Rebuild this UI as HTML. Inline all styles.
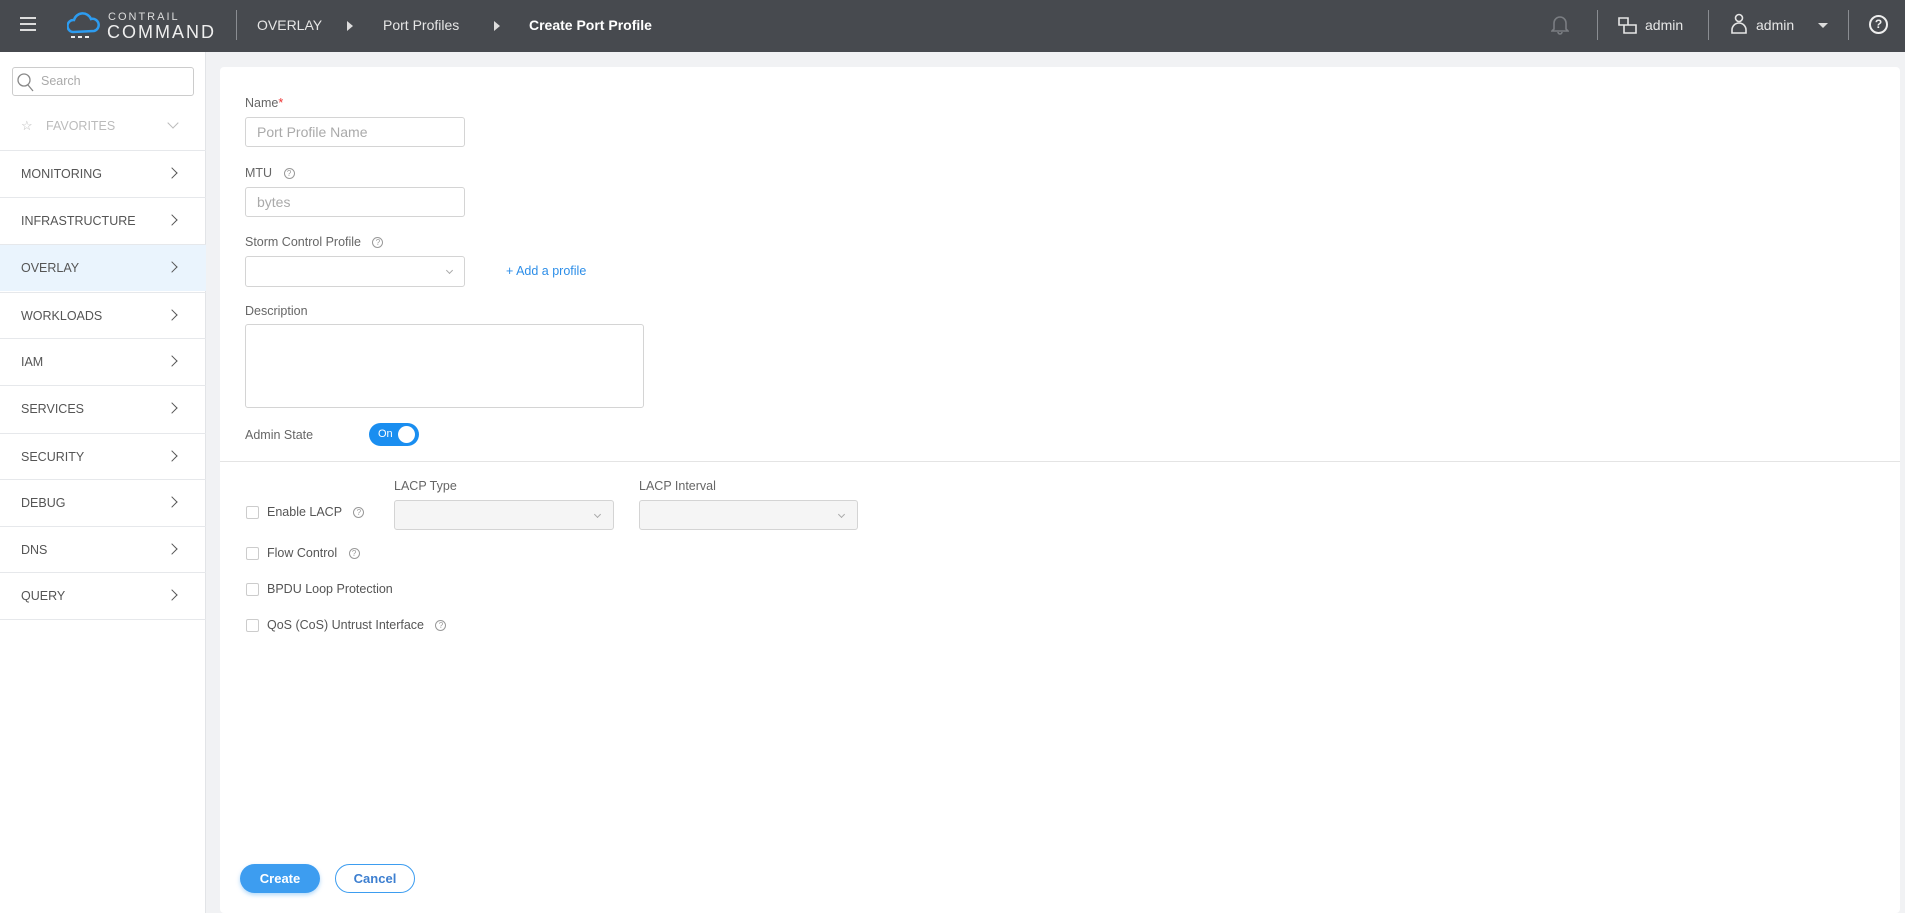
<!DOCTYPE html><html><head><style>
*{box-sizing:border-box;margin:0;padding:0}
body{width:1905px;height:913px;overflow:hidden;background:#f1f2f4;font-family:"Liberation Sans",sans-serif;position:relative;color:#555}
.a{position:absolute}
#hd{left:0;top:0;width:1905px;height:52px;background:#474a4f;color:#e6e6e6}
.sep{position:absolute;top:10px;width:1px;height:30px;background:#8a8d92}
#sb{left:0;top:52px;width:206px;height:861px;background:#fff;border-right:1px solid #e2e4e7}
.it{position:absolute;left:0;width:206px;height:47px;border-top:1px solid #e6e8eb;font-size:12.5px;color:#555;padding-left:21px;line-height:46px}
.it .ch{position:absolute;left:168px;top:18px;width:8px;height:8px;border-right:1.6px solid #555;border-top:1.6px solid #555;transform:rotate(45deg)}
#card{left:220px;top:67px;width:1680px;height:846px;background:#fff;border-radius:4px}
.lb{position:absolute;font-size:12.5px;color:#666}
.in{position:absolute;border:1px solid #d4d4d4;border-radius:3px;background:#fff;font-size:14px;color:#aaa;padding-left:11px}
.q{display:inline-block;width:11px;height:11px;border:1px solid #999;border-radius:50%;font-size:8px;line-height:9px;text-align:center;color:#999;vertical-align:middle;margin-left:8px}
.cb{position:absolute;width:13px;height:13px;border:1px solid #ccc;border-radius:2px}
.dd{position:absolute;width:5px;height:5px;border-right:1px solid #aaa;border-bottom:1px solid #aaa;transform:rotate(45deg)}
</style></head><body>
<div id="hd" class="a">
 <div class="a" style="left:20px;top:17px;width:16px;height:2px;background:#ddd;box-shadow:0 6px 0 #ddd,0 12px 0 #ddd"></div>
 <svg class="a" style="left:67px;top:10px" width="34" height="30" viewBox="0 0 34 30"><path d="M6 22a6 6 0 0 1 1-12 9 9 0 0 1 17-1 6 6 0 0 1 3 12z" fill="none" stroke="#2d9cf0" stroke-width="2.5"/><path d="M4 27h4M11 27h4M18 27h4" stroke="#eee" stroke-width="2"/></svg>
 <div class="a" style="left:108px;top:11px;font-size:11px;letter-spacing:2px;color:#ddd">CONTRAIL</div>
 <div class="a" style="left:107px;top:22px;font-size:18px;letter-spacing:2px;color:#eee">COMMAND</div>
 <div class="sep" style="left:236px"></div>
 <div class="a" style="left:257px;top:17px;font-size:14px">OVERLAY</div>
 <div class="a" style="left:347px;top:21px;border-left:6px solid #ddd;border-top:5px solid transparent;border-bottom:5px solid transparent"></div>
 <div class="a" style="left:383px;top:17px;font-size:14px">Port Profiles</div>
 <div class="a" style="left:494px;top:21px;border-left:6px solid #ddd;border-top:5px solid transparent;border-bottom:5px solid transparent"></div>
 <div class="a" style="left:529px;top:17px;font-size:14px;font-weight:bold;color:#fff">Create Port Profile</div>
 <svg class="a" style="left:1551px;top:14px" width="18" height="21" viewBox="0 0 18 21"><path d="M3 15V9a6 6 0 0 1 12 0v6l2 2H1z M7 18a2 2 0 0 0 4 0" fill="none" stroke="#7a7d82" stroke-width="1.6"/></svg>
 <div class="sep" style="left:1597px"></div>
 <svg class="a" style="left:1618px;top:17px" width="19" height="18" viewBox="0 0 19 18"><path d="M1 1h9v7H1z M6 8v8h12V8h-8" fill="none" stroke="#e6e6e6" stroke-width="1.6"/></svg>
 <div class="a" style="left:1645px;top:17px;font-size:14px">admin</div>
 <div class="sep" style="left:1708px"></div>
 <svg class="a" style="left:1731px;top:13px" width="16" height="22" viewBox="0 0 16 22"><circle cx="8" cy="5" r="3.5" fill="none" stroke="#e6e6e6" stroke-width="1.6"/><path d="M1 20v-3a7 7 0 0 1 14 0v3z" fill="none" stroke="#e6e6e6" stroke-width="1.6"/></svg>
 <div class="a" style="left:1756px;top:17px;font-size:14px">admin</div>
 <div class="a" style="left:1818px;top:23px;border-top:5px solid #ddd;border-left:5px solid transparent;border-right:5px solid transparent"></div>
 <div class="sep" style="left:1848px"></div>
 <div class="a" style="left:1869px;top:15px;width:19px;height:19px;border:2px solid #eee;border-radius:50%;font-size:12px;font-weight:bold;text-align:center;line-height:15px;color:#eee">?</div>
</div>
<div id="sb" class="a">
 <div class="a" style="left:12px;top:15px;width:182px;height:29px;border:1px solid #ccc;border-radius:3px"></div>
 <svg class="a" style="left:16px;top:20px" width="18" height="20"><circle cx="8" cy="8" r="6" fill="none" stroke="#888" stroke-width="1.3"/><path d="M12 13l5 6" stroke="#888" stroke-width="1.3"/></svg>
 <div class="a" style="left:41px;top:22px;font-size:12.5px;color:#aaa">Search</div>
 <div class="a" style="left:21px;top:66px;font-size:13px;color:#bbb">☆</div>
 <div class="a" style="left:46px;top:67px;font-size:12.5px;color:#bbb">FAVORITES</div>
 <div class="a" style="left:169px;top:67px;width:8px;height:8px;border-right:1.3px solid #bbb;border-bottom:1.3px solid #bbb;transform:rotate(45deg)"></div>
 <div class="it" style="top:98px">MONITORING<span class="ch"></span></div>
 <div class="it" style="top:145px">INFRASTRUCTURE<span class="ch"></span></div>
 <div class="it" style="top:192px;background:#eaf4fd">OVERLAY<span class="ch"></span></div>
 <div class="it" style="top:240px">WORKLOADS<span class="ch"></span></div>
 <div class="it" style="top:286px">IAM<span class="ch"></span></div>
 <div class="it" style="top:333px">SERVICES<span class="ch"></span></div>
 <div class="it" style="top:381px">SECURITY<span class="ch"></span></div>
 <div class="it" style="top:427px">DEBUG<span class="ch"></span></div>
 <div class="it" style="top:474px">DNS<span class="ch"></span></div>
 <div class="it" style="top:520px;border-bottom:1px solid #e6e8eb;height:48px">QUERY<span class="ch"></span></div>
</div>
<div id="card" class="a"></div>
<div class="lb" style="left:245px;top:96px">Name<span style="color:#e33">*</span></div>
<div class="in" style="left:245px;top:117px;width:220px;height:30px;line-height:28px">Port Profile Name</div>
<div class="lb" style="left:245px;top:166px">MTU <span class="q">?</span></div>
<div class="in" style="left:245px;top:187px;width:220px;height:30px;line-height:28px">bytes</div>
<div class="lb" style="left:245px;top:235px">Storm Control Profile <span class="q">?</span></div>
<div class="in" style="left:245px;top:256px;width:220px;height:31px"></div><div class="dd" style="left:447px;top:268px"></div>
<div class="a" style="left:506px;top:264px;font-size:12.5px;color:#2d8ee8">+ Add a profile</div>
<div class="lb" style="left:245px;top:304px">Description</div>
<div class="in" style="left:245px;top:324px;width:399px;height:84px"></div>
<div class="lb" style="left:245px;top:428px">Admin State</div>
<div class="a" style="left:369px;top:423px;width:50px;height:23px;border-radius:12px;background:#1a8ef0;"><span class="a" style="left:9px;top:5px;font-size:11px;line-height:13px;color:#fff">On</span><span class="a" style="left:29px;top:3px;width:17px;height:17px;border-radius:50%;background:#fff"></span></div>
<div class="a" style="left:220px;top:461px;width:1680px;height:1px;background:#e4e4e4"></div>
<div class="lb" style="left:394px;top:479px">LACP Type</div>
<div class="lb" style="left:639px;top:479px">LACP Interval</div>
<div class="in" style="left:394px;top:500px;width:220px;height:30px;background:#f5f5f5"></div><div class="dd" style="left:595px;top:512px"></div>
<div class="in" style="left:639px;top:500px;width:219px;height:30px;background:#f5f5f5"></div><div class="dd" style="left:839px;top:512px"></div>
<div class="cb" style="left:246px;top:506px"></div><div class="lb" style="left:267px;top:505px;color:#555">Enable LACP <span class="q">?</span></div>
<div class="cb" style="left:246px;top:547px"></div><div class="lb" style="left:267px;top:546px;color:#555">Flow Control <span class="q">?</span></div>
<div class="cb" style="left:246px;top:583px"></div><div class="lb" style="left:267px;top:582px;color:#555">BPDU Loop Protection</div>
<div class="cb" style="left:246px;top:619px"></div><div class="lb" style="left:267px;top:618px;color:#555">QoS (CoS) Untrust Interface <span class="q">?</span></div>
<div class="a" style="left:240px;top:864px;width:80px;height:29px;border-radius:15px;background:#3d9df0;box-shadow:0 2px 4px rgba(61,157,240,.4);color:#fff;font-size:13px;font-weight:bold;text-align:center;line-height:29px">Create</div>
<div class="a" style="left:335px;top:864px;width:80px;height:29px;border-radius:15px;border:1px solid #3d9df0;color:#3d7fd0;font-size:13px;font-weight:bold;text-align:center;line-height:27px">Cancel</div>
</body></html>
